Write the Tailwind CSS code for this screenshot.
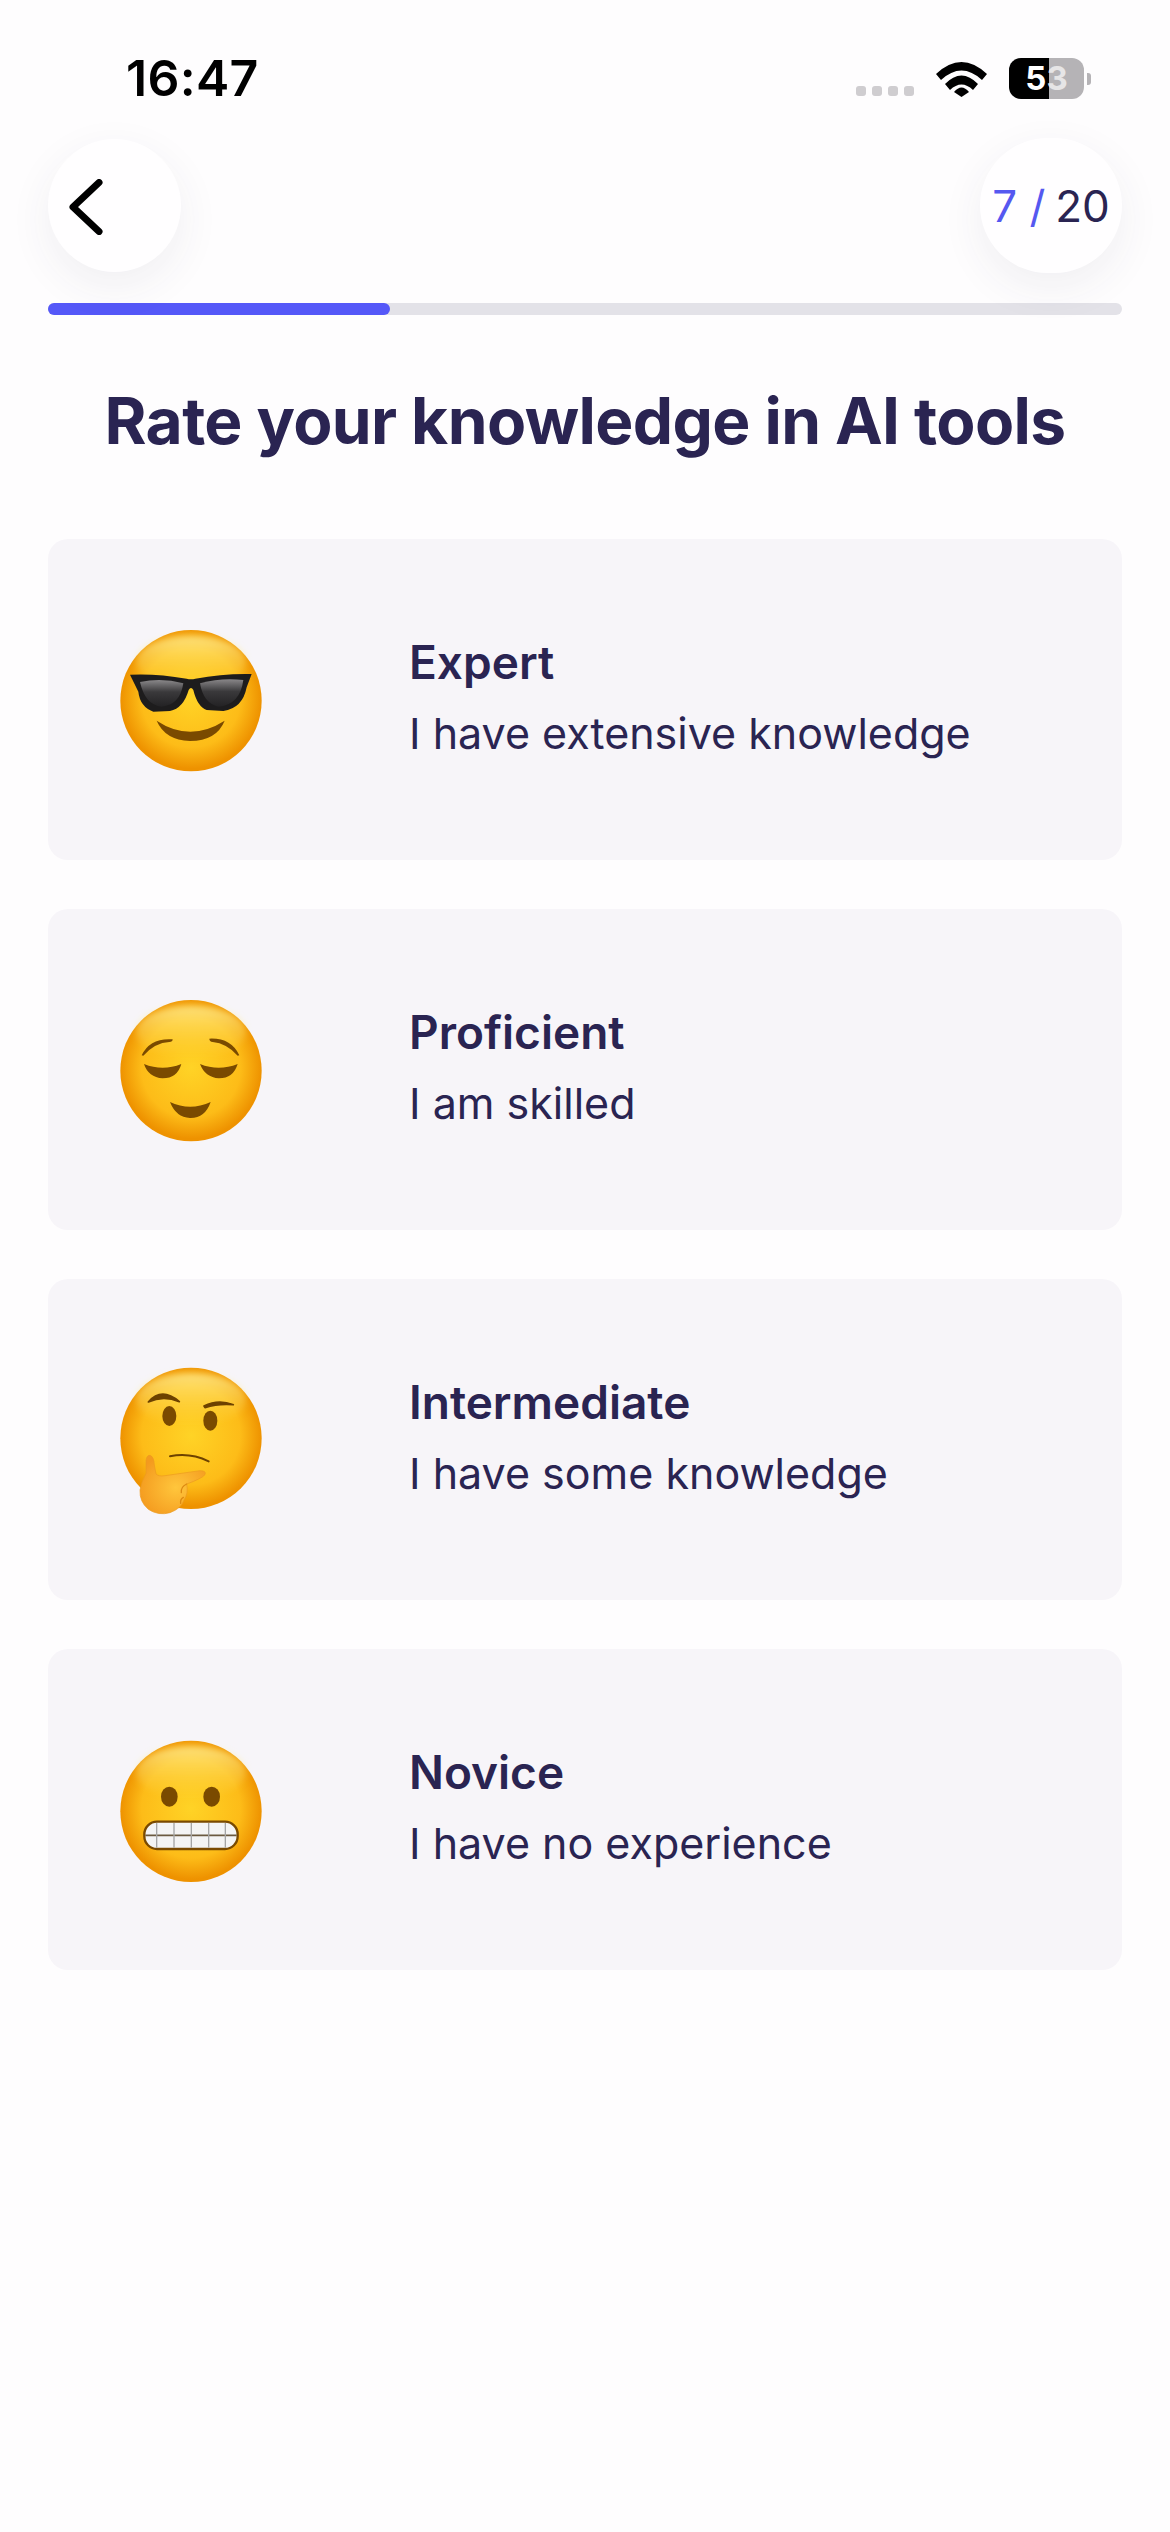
<!DOCTYPE html>
<html>
	<head>
		<meta charset="UTF-8" />
		<meta name="viewport" content="width=device-width, initial-scale=1.0" />
		<title>Rate your knowledge</title>
		<script src="https://cdn.jsdelivr.net/npm/@tailwindcss/browser@4"></script>
	</head>
	<body class="w-[1170px] h-[2532px] bg-[#fefdfe] font-['Inter',sans-serif] text-[#2a2452] overflow-hidden">
		<!-- status bar -->
		<div class="h-[138px] flex items-start justify-between pl-[126px] pr-[79px] pt-[50px]">
			<div class="text-[50px] leading-[56px] font-semibold text-black tracking-[0.3px]">16:47</div>
			<div class="flex items-start pt-[8px]">
				<div class="flex gap-[6px] mt-[28px]">
					<div class="w-[10px] h-[10px] rounded-[3px] bg-[#cfcdd0]"></div>
					<div class="w-[10px] h-[10px] rounded-[3px] bg-[#cfcdd0]"></div>
					<div class="w-[10px] h-[10px] rounded-[3px] bg-[#cfcdd0]"></div>
					<div class="w-[10px] h-[10px] rounded-[3px] bg-[#cfcdd0]"></div>
				</div>
				<svg class="ml-[22px] mt-[2px]" width="51" height="38" viewBox="0 0 51 38">
					<path d="M0 14 Q25.500 -10 51 14 L46 20 Q25.500 1 5 20 Z" fill="#000" />
					<path d="M9 24 Q25.500 7 42 24 L37 30 Q25.500 19 14 30 Z" fill="#000" />
					<path d="M18 33 Q25.500 24 33 33 L25.500 38 Z" fill="#000" transform="translate(0 -1)" />
				</svg>
				<div class="relative ml-[22px] w-[75px] h-[41px] rounded-[12px] overflow-hidden flex">
					<div class="w-[40px] bg-black"></div>
					<div class="flex-1 bg-[#b5b3b6]"></div>
					<div class="absolute inset-0 flex items-center justify-center text-[33px] leading-none font-bold">
						<span class="text-white">5</span><span class="text-[#e6e5e6]">3</span>
					</div>
				</div>
				<div class="w-[4px] h-[12px] ml-[3px] mt-[15px] rounded-r-[3px] bg-[#b5b3b6]"></div>
			</div>
		</div>

		<!-- header -->
		<div class="px-[48px]">
			<div class="h-[135px] flex items-center justify-between">
				<div class="w-[133px] h-[133px] rounded-full bg-[#fffeff] shadow-[0_14px_44px_rgba(60,50,90,0.07)] flex items-center pl-[21px] pt-[2px]">
					<svg width="34" height="56" viewBox="0 0 34 56" fill="none">
						<path d="M30 3.500 L4 28 L30 52.500" stroke="#000" stroke-width="7" stroke-linecap="round" stroke-linejoin="round" />
					</svg>
				</div>
				<div class="w-[142px] h-[135px] rounded-full bg-[#fffeff] shadow-[0_14px_44px_rgba(60,50,90,0.07)] flex items-center justify-center text-[44px] leading-none whitespace-nowrap">
					<span class="text-[#5558f0]">7 /</span><span class="ml-[10px]">20</span>
				</div>
			</div>
			<div class="mt-[30px] h-[12px] rounded-[6px] bg-[#e3e2e8]">
				<div class="w-[342px] h-[12px] rounded-[6px] bg-[#5558f8]"></div>
			</div>
			<div class="h-[224px] pb-[12px] flex items-center justify-center text-[64px] leading-none font-bold tracking-[-0.6px] whitespace-nowrap">
				Rate your knowledge in AI tools
			</div>

			<!-- options -->
			<div class="flex flex-col gap-[49px]">
				<div class="h-[321px] rounded-[20px] bg-[#f7f5f9] flex items-center pl-[42px]">
					<svg class="shrink-0" width="200" height="200" viewBox="0 0 600 600">
						<defs>
							<radialGradient id="face" cx="50%" cy="48%" r="50%">
								<stop offset="0" stop-color="#ffd326" />
								<stop offset="0.7" stop-color="#fdbc18" />
								<stop offset="1" stop-color="#ee9200" />
							</radialGradient>
							<linearGradient id="shine" x1="0" y1="0" x2="0" y2="1">
								<stop offset="0" stop-color="#fff3a0" stop-opacity="0.75" />
								<stop offset="1" stop-color="#ffe050" stop-opacity="0" />
							</linearGradient>
							<linearGradient id="lens" x1="0" y1="0" x2="0" y2="1">
								<stop offset="0" stop-color="#8a888a" />
								<stop offset="0.45" stop-color="#3a393b" />
								<stop offset="1" stop-color="#232224" />
							</linearGradient>
							<radialGradient id="hand" cx="55%" cy="55%" r="60%">
								<stop offset="0" stop-color="#ffc63c" />
								<stop offset="1" stop-color="#f49a1e" />
							</radialGradient>
							<filter id="soft" x="-20%" y="-30%" width="140%" height="160%">
								<feGaussianBlur stdDeviation="10" />
							</filter>
						</defs>
						<circle cx="303" cy="302" r="212" fill="url(#face)" />
						<ellipse cx="303" cy="185" rx="165" ry="78" fill="url(#shine)" filter="url(#soft)" />
						<path d="M120 224 Q200 220 290 236 Q303 240 316 236 Q400 220 485 222 L470 262 Q458 325 400 333 L350 330 Q322 320 310 270 Q303 258 296 270 Q280 325 240 333 L190 335 Q150 320 145 275 Z" fill="#1d1c1d" />
						<path d="M150 246 Q215 232 280 250 Q270 315 215 320 Q165 315 150 246 Z" fill="url(#lens)" />
						<path d="M330 250 Q395 232 460 240 Q450 315 385 320 Q340 310 330 250 Z" fill="url(#lens)" />
						<path d="M200 362 Q300 428 404 362 Q380 422 300 423 Q225 420 200 362 Z" fill="#7a4a00" />
					</svg>
					<div class="ml-[119px] mb-[3px]">
						<div class="text-[46px] leading-[71px] font-semibold">Expert</div>
						<div class="text-[43px] leading-[71px]">I have extensive knowledge</div>
					</div>
				</div>

				<div class="h-[321px] rounded-[20px] bg-[#f7f5f9] flex items-center pl-[42px]">
					<svg class="shrink-0" width="200" height="200" viewBox="0 0 600 600">
						<circle cx="303" cy="302" r="212" fill="url(#face)" />
						<ellipse cx="303" cy="185" rx="165" ry="78" fill="url(#shine)" filter="url(#soft)" />
						<path d="M155 256 Q180 203 248 208 Q248 216 238 216 Q195 218 160 257 Z" fill="#7a4a00" />
						<path d="M448 256 Q423 203 358 206 Q358 214 368 216 Q410 220 443 257 Z" fill="#7a4a00" />
						<path d="M162 282 Q218 305 274 282 Q262 325 218 325 Q175 322 162 282 Z" fill="#7a4a00" />
						<path d="M330 282 Q386 305 443 282 Q430 325 387 325 Q345 322 330 282 Z" fill="#7a4a00" />
						<path d="M240 396 Q300 425 362 396 Q345 445 300 444 Q258 442 240 396 Z" fill="#7a4a00" />
					</svg>
					<div class="ml-[119px] mb-[3px]">
						<div class="text-[46px] leading-[71px] font-semibold">Proficient</div>
						<div class="text-[43px] leading-[71px]">I am skilled</div>
					</div>
				</div>

				<div class="h-[321px] rounded-[20px] bg-[#f7f5f9] flex items-center pl-[42px]">
					<svg class="shrink-0" width="200" height="200" viewBox="0 0 600 600">
						<circle cx="303" cy="295" r="212" fill="url(#face)" />
						<ellipse cx="303" cy="178" rx="165" ry="78" fill="url(#shine)" filter="url(#soft)" />
						<path d="M175 186 Q215 140 268 185 Q220 165 175 186 Z" fill="#6d4200" stroke="#6d4200" stroke-width="5" stroke-linejoin="round" />
						<path d="M342 198 Q385 176 430 194 Q385 190 345 203 Z" fill="#6d4200" stroke="#6d4200" stroke-width="5" stroke-linejoin="round" />
						<ellipse cx="238" cy="228" rx="21" ry="30" fill="#7a4a00" />
						<ellipse cx="361" cy="242" rx="21" ry="30" fill="#7a4a00" />
						<path d="M240 349 Q300 337 356 364" fill="none" stroke="#6d4200" stroke-width="6" stroke-linecap="round" />
						<path d="M168 362 Q170 345 180 346 Q192 350 193 375 L198 402 Q205 410 225 407 L330 392 Q350 392 345 404 Q335 416 290 432 Q296 460 282 480 Q275 505 240 518 Q205 528 175 508 Q148 485 150 450 Q155 425 168 400 Z" fill="url(#hand)" stroke="#ec9a20" stroke-width="2" />
						<path d="M290 432 Q272 440 274 458 M280 472 Q270 478 272 490" fill="none" stroke="#dd8a12" stroke-width="4" stroke-linecap="round" />
					</svg>
					<div class="ml-[119px] mb-[3px]">
						<div class="text-[46px] leading-[71px] font-semibold">Intermediate</div>
						<div class="text-[43px] leading-[71px]">I have some knowledge</div>
					</div>
				</div>

				<div class="h-[321px] rounded-[20px] bg-[#f7f5f9] flex items-center pl-[42px]">
					<svg class="shrink-0" width="200" height="200" viewBox="0 0 600 600">
						<circle cx="303" cy="304" r="212" fill="url(#face)" />
						<ellipse cx="303" cy="187" rx="165" ry="78" fill="url(#shine)" filter="url(#soft)" />
						<ellipse cx="238" cy="260" rx="25" ry="30" fill="#7a4a00" />
						<ellipse cx="365" cy="260" rx="25" ry="30" fill="#7a4a00" />
						<rect x="163" y="335" width="280" height="82" rx="38" fill="#f4f4f4" stroke="#7a4a00" stroke-width="7" />
						<path d="M166 376 H440" stroke="#6b5a40" stroke-width="5" />
						<path d="M200 339 V413 M252 339 V413 M304 339 V413 M356 339 V413 M406 339 V413" stroke="#a5a5a5" stroke-width="4" />
					</svg>
					<div class="ml-[119px] mb-[3px]">
						<div class="text-[46px] leading-[71px] font-semibold">Novice</div>
						<div class="text-[43px] leading-[71px]">I have no experience</div>
					</div>
				</div>
			</div>
		</div>
	</body>
</html>
